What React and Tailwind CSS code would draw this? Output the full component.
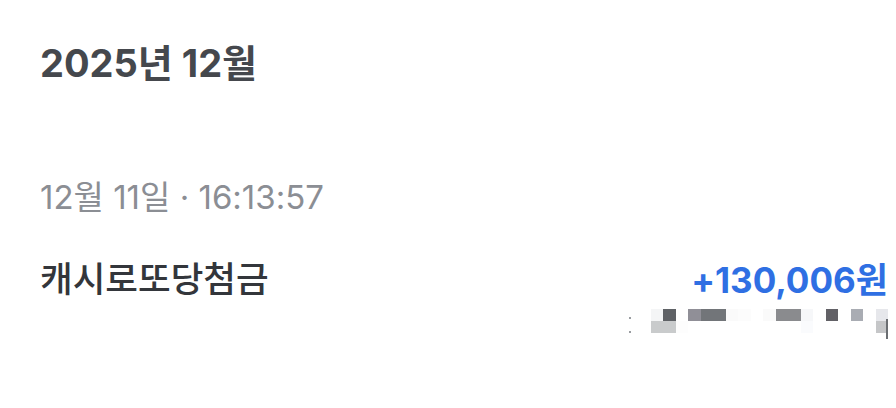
const FONT = "font-['Inter','Noto_Sans_CJK_KR',sans-serif]";

// pixelated (masked) area under the amount
const MOSAIC_TOP = [
  'bg-[#f4f5f6]', 'bg-[#5f6266]', 'bg-white', 'bg-[#908f97]', 'bg-[#727579]', 'bg-[#727579]',
  'bg-[#fafafa]', 'bg-[#fcfcfc]', 'bg-white', 'bg-[#fafafa]', 'bg-[#8a8b8e]', 'bg-[#8a8b8e]',
  'bg-[#f6f7f9]', 'bg-white', 'bg-[#626166]', 'bg-white', 'bg-[#a9acb3]', 'bg-white', 'bg-[#e6e7eb]',
];
const MOSAIC_BOTTOM = [
  'bg-[#c9cbcc]', 'bg-[#c9cbcc]', 'bg-[#fdfdfd]', 'bg-white', 'bg-white', 'bg-white',
  'bg-white', 'bg-white', 'bg-white', 'bg-white', 'bg-white', 'bg-white',
  'bg-[#fafbfd]', 'bg-white', 'bg-white', 'bg-white', 'bg-white', 'bg-white', 'bg-[#c5c6c8]',
];

function Mosaic() {
  return (
    <div className="relative">
      <div className="flex">
        {MOSAIC_TOP.map((c, i) => <div key={i} className={`w-[12.5px] h-[12px] ${c}`} />)}
      </div>
      <div className="flex">
        {MOSAIC_BOTTOM.map((c, i) => <div key={i} className={`w-[12.5px] h-[12px] ${c}`} />)}
      </div>
      <div className="absolute right-0 top-[10px] w-[2px] h-[20px] bg-[#6b6e72]" />
      <div className="absolute left-[-22px] top-[8px] w-[2px] h-[2px] bg-[#9a9da1]" />
      <div className="absolute left-[-22px] top-[22px] w-[2px] h-[2px] bg-[#9a9da1]" />
    </div>
  );
}

export default function App() {
  return (
    <main className={`w-[896px] h-[408px] bg-white pl-[40px] pr-[8px] pt-[41px] overflow-hidden ${FONT}`}>
      <h1 className="text-[38px] leading-[44px] font-bold text-[#45484d]">2025년 12월</h1>

      <p className="mt-[94px] text-[33px] leading-[36px] text-[#8b8e94]">12월 11일 · 16:13:57</p>

      <div className="mt-[43px] flex justify-between items-start">
        <span className="text-[35.5px] leading-[44px] font-medium text-[#33363b]">캐시로또당첨금</span>
        <div className="flex flex-col items-end">
          <span className="text-[35px] leading-[44px] font-bold text-[#2f6fe3]">+130,006원</span>
          <div className="mt-[7px]">
            <Mosaic />
          </div>
        </div>
      </div>
    </main>
  );
}
